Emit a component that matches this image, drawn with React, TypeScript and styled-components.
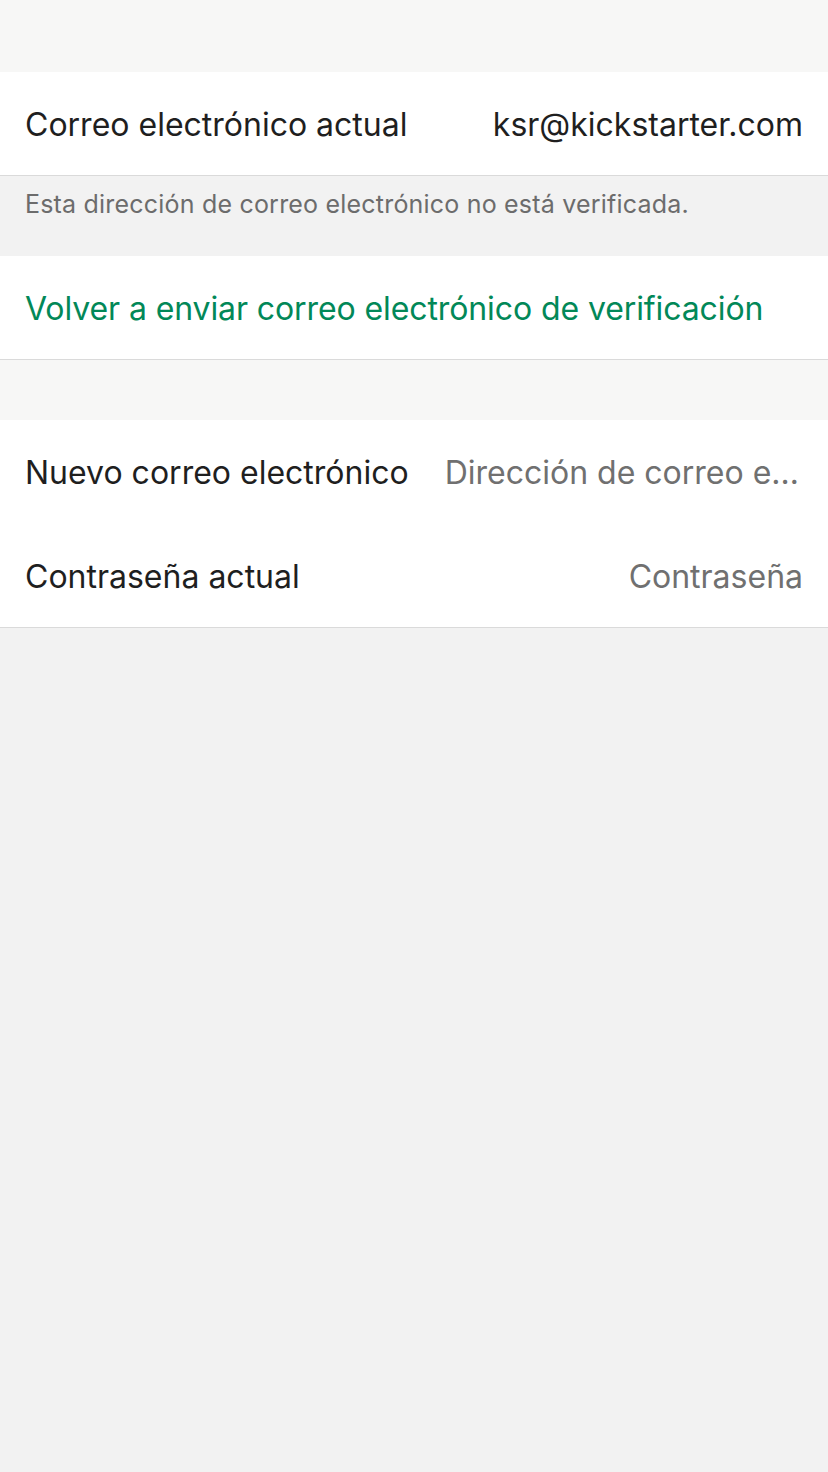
import React from 'react';
import styled, { createGlobalStyle } from 'styled-components';

const GlobalStyle = createGlobalStyle`
	html, body {
		margin: 0;
		padding: 0;
		background: #f2f2f2;
		font-family: Inter, "Liberation Sans", sans-serif;
		-webkit-font-smoothing: antialiased;
	}
`;

export default function App() {
	return (
		<Page>
			<GlobalStyle />
			<Spacer height={72} tone="#f7f7f6" />
			<Section>
				<Row>
					<Label>Correo electrónico actual</Label>
					<Label>ksr@kickstarter.com</Label>
				</Row>
			</Section>
			<Footer>Esta dirección de correo electrónico no está verificada.</Footer>
			<Section>
				<Row>
					<Action>Volver a enviar correo electrónico de verificación</Action>
				</Row>
			</Section>
			<Spacer height={60} tone="#f7f7f6" />
			<Section>
				<Row>
					<Label>Nuevo correo electrónico</Label>
					<Field placeholder="Dirección de correo electrónico" type="email" />
				</Row>
				<Row>
					<Label>Contraseña actual</Label>
					<Field placeholder="Contraseña" type="password" />
				</Row>
			</Section>
		</Page>
	);
}

/**
 * Styled Components...
 */
const Page = styled.div`
	width: 828px;
	min-height: 1472px;
	background: #f2f2f2;
	display: flex;
	flex-direction: column;
`;
const Spacer = styled.div<{ height: number; tone: string }>`
	height: ${p => p.height}px;
	background: ${p => p.tone};
`;
const Section = styled.div`
	background: #ffffff;
	border-bottom: 1px solid #dadada;
`;
const Row = styled.div`
	height: 103px;
	padding: 0 25px;
	display: flex;
	align-items: center;
	justify-content: space-between;
	gap: 36px;
	& + & {
		height: 104px;
	}
`;
const Label = styled.span`
	font-size: 32px;
	color: #1f1f1f;
	white-space: nowrap;
	padding-top: 2px;
`;
const Action = styled.span`
	font-size: 32px;
	color: #028858;
	white-space: nowrap;
	letter-spacing: -0.1px;
	padding-top: 2px;
`;
const Field = styled.input`
	flex: 1;
	min-width: 0;
	border: none;
	outline: none;
	background: transparent;
	padding: 2px 0 0;
	text-align: right;
	font-family: inherit;
	font-size: 32px;
	color: #1f1f1f;
	text-overflow: ellipsis;
	&::placeholder {
		color: #707070;
		opacity: 1;
	}
`;
const Footer = styled.div`
	height: 80px;
	box-sizing: border-box;
	padding: 13px 25px 0;
	display: flex;
	align-items: flex-start;
	font-size: 25px;
	letter-spacing: 0.2px;
	color: #6c6c6c;
	background: #f2f2f2;
`;
